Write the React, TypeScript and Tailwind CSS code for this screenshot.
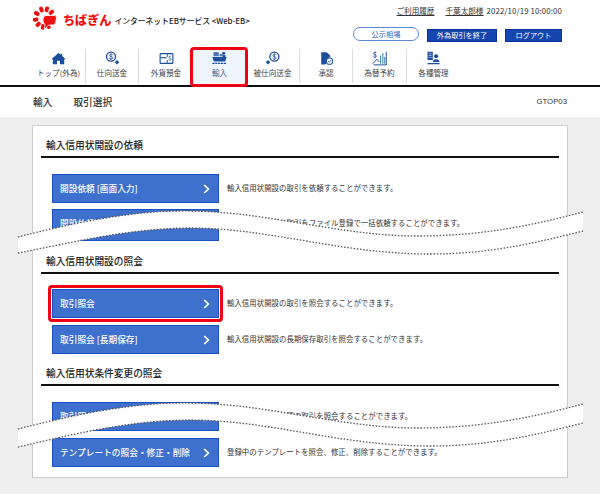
const font = "font-['Noto_Sans_CJK_JP','Liberation_Sans',sans-serif]";

function Logo() {
  const petals = [-20, 15, 50, 85, 120, 155, 190, 225, 260, 300];
  return (
    <svg width="24" height="24" viewBox="0 0 24 24" className="shrink-0">
      {petals.map((a) => (
        <rect key={a} x="9.6" y="0.2" width="3.8" height="5.6" rx="1.3" fill="#ee1111" transform={`rotate(${a} 11.5 12)`} />
      ))}
      <path d="M13 9.5 H21 C23 9.5 23.6 10.5 23.4 12.5 L22.6 16.5 C22.3 18 21 18.6 19.5 18.8 L15.5 19.2 L11.5 23.5 L12 18.5 C10.2 17.5 9.6 15 10.2 12.5 C10.6 10.5 11.5 9.5 13 9.5Z" fill="#ee1111" stroke="#fff" strokeWidth="0.8" />
    </svg>
  );
}

const stroke = "#1d4e9e";
const icons: Record<string, React.ReactNode> = {
  home: <path d="M10 2.5 L13 5 V3.5 H15 V6.8 L19 10.2 L17.6 11.6 V17.5 H12 V13 H8 V17.5 H2.4 V11.6 L1 10.2Z" fill={stroke} />,
  send: (<g><circle cx="8" cy="7.5" r="6" fill="none" stroke={stroke} strokeWidth="1.8" /><path d="M10.4 5.2 C9.5 4 6 4 6 6 C6 8 10.4 7 10.4 9 C10.4 11 6.8 11 5.6 9.8 M8 3 V12" fill="none" stroke={stroke} strokeWidth="1" /><path d="M16 12 L19 15 L16 18 L13 15Z" fill={stroke} /></g>),
  dep: (<g><rect x="1.5" y="3.5" width="17" height="13" rx="1" fill="none" stroke={stroke} strokeWidth="1.5" /><path d="M2 9 H10" stroke={stroke} strokeWidth="1.5" /><path d="M11 4 V8 M11 12 V16" stroke={stroke} strokeWidth="1.2" /><path d="M16.2 7.5 C15.5 6.6 13 6.7 13 8.2 C13 9.8 16.2 9.3 16.2 11 C16.2 12.5 13.6 12.5 12.8 11.6" fill="none" stroke={stroke} strokeWidth="1" /></g>),
  ship: (<g><path d="M2 1.5 H9 V7 H2Z" fill="#4a74b8" /><rect x="10" y="4" width="4" height="3" fill="#4a74b8" /><circle cx="15.5" cy="3" r="2" fill={stroke} /><path d="M14 5.5 H18 V9 H14Z" fill={stroke} /><path d="M0.5 8 H19.5 L17.5 14 H2.5Z" fill={stroke} /><path d="M0.5 16.5 H19.5" stroke={stroke} strokeWidth="1.6" strokeDasharray="3 0.8" /></g>),
  recv: (<g><circle cx="12.5" cy="7.5" r="6" fill="none" stroke={stroke} strokeWidth="1.8" /><path d="M14.9 5.2 C14 4 10.5 4 10.5 6 C10.5 8 14.9 7 14.9 9 C14.9 11 11.3 11 10.1 9.8 M12.5 3 V12" fill="none" stroke={stroke} strokeWidth="1" /><path d="M4 12 L7 15 L4 18 L1 15Z" fill={stroke} /></g>),
  ok: (<g><path d="M3 1.5 H10 L15 6 V8 C11 9 9.5 12 10 16 L8 18 H3Z" fill={stroke} /><circle cx="14" cy="13.5" r="4.2" fill="#fff" stroke={stroke} strokeWidth="1.4" /><path d="M12.2 13.5 L13.7 15 L16 12.2" fill="none" stroke={stroke} strokeWidth="1.1" /></g>),
  fx: (<g><path d="M6 2.5 C5 1.3 2 1.5 2 3.5 C2 5.5 6 4.8 6 6.8 C6 8.6 3 8.8 1.8 7.6 M4 0.5 V10" fill="none" stroke={stroke} strokeWidth="1" /><path d="M1 17 L6.5 11 L9.5 14.5 M19 1 V18.5 H2" fill="none" stroke={stroke} strokeWidth="1.3" /><path d="M11.5 6 V17 M14.5 3 V17 M17 8 V17" stroke="#3a86a8" strokeWidth="1.4" /></g>),
  mgmt: (<g><rect x="2" y="1" width="7" height="11" fill={stroke} /><path d="M3.5 3.5 H7.5 M3.5 6 H7.5 M3.5 8.5 H7.5" stroke="#fff" strokeWidth="0.7" /><circle cx="13.5" cy="7" r="2.8" fill={stroke} /><path d="M9 14.5 C9 10 18 10 18 14.5Z" fill={stroke} /><path d="M2 16.8 H18" stroke={stroke} strokeWidth="1.8" /></g>),
};

const tabs: [string, string, number][] = [
  ["トップ(外為)", "home", 54],
  ["仕向送金", "send", 53],
  ["外貨預金", "dep", 54],
  ["輸入", "ship", 53],
  ["被仕向送金", "recv", 54],
  ["承認", "ok", 53],
  ["為替予約", "fx", 54],
  ["各種管理", "mgmt", 53],
];

function Nav() {
  return (
    <div className="flex pl-[32px] h-[36px] items-start">
      {tabs.map(([label, icon, w], i) => {
        const active = label === "輸入";
        const sep = i < tabs.length - 1 && !active && tabs[i + 1][0] !== "輸入";
        return (
          <div
            key={label}
            className={`relative flex flex-col items-center h-[34px] pt-[2px] shrink-0 ${sep ? "border-r border-[#dddddd]" : ""} ${active ? "bg-[#eef4fc]" : ""}`}
            style={{ width: w }}
          >
            <svg width="15" height="15" viewBox="0 0 20 20" className="shrink-0">{icons[icon]}</svg>
            <span className={`text-[7.6px] leading-[12px] mt-[1px] whitespace-nowrap ${active ? "text-[#4a5f80]" : "text-[#444444]"}`}>{label}</span>
            {active && <div className="absolute -left-[3px] -top-[2px] -right-[2px] -bottom-[4px] border-[3px] border-[#f00014] rounded-[4px]" />}
          </div>
        );
      })}
    </div>
  );
}

function Btn({ label, desc, hl, tall }: { label: string; desc: string; hl?: boolean; tall?: boolean }) {
  return (
    <div className="flex items-start">
      <div className={`relative w-[167px] bg-[#3e70cd] border border-[#1a4fc4] shrink-0 ${tall ? "h-[32px]" : "h-[29px]"}`}>
        <div className="flex items-center justify-between h-[27px] pl-[7px] pr-[8px]">
          <span className="text-white text-[8.7px] font-medium whitespace-nowrap">{label}</span>
          <svg width="7" height="10" viewBox="0 0 7 10" className="shrink-0"><path d="M1.2 1 L5.4 5 L1.2 9" fill="none" stroke="#fff" strokeWidth="1.7" /></svg>
        </div>
        {hl && <div className="absolute -inset-[5px] border-[3px] border-[#f00014] rounded-[4px]" />}
      </div>
      <span className="ml-[8px] h-[27px] flex items-center text-[7.45px] text-[#333333] whitespace-nowrap">{desc}</span>
    </div>
  );
}

type Item = { label: string; desc: string; hl?: boolean; tall?: boolean };

function Section({ title, items, cls, pad }: { title: string; items: Item[]; cls: string; pad: string }) {
  return (
    <div className={cls}>
      <div className="mx-[8px] border-b-2 border-[#111111] pl-[5px] h-[23px] text-[9.7px] font-medium leading-[20px] text-[#222222]">{title}</div>
      <div className={`pl-[19px] flex flex-col ${pad}`}>
        {items.map((it) => <Btn key={it.label} {...it} />)}
      </div>
    </div>
  );
}

function Wave({ top, last }: { top: number; last?: boolean }) {
  const a = "M18 45 C70 32 130 18 190 19 C270 20 340 44 417 44 C480 44 530 34 583 20";
  const b = last
    ? "M18 63 C70 51 130 36 190 36 C270 36 340 62 430 62 C490 62 535 51 583 39"
    : "M18 61 C70 51 130 36 190 36 C270 36 340 62 430 62 C490 62 535 51 583 39";
  const rev = last
    ? "L583 39 C535 51 490 62 430 62 C340 62 270 36 190 36 C130 36 70 51 18 63Z"
    : "L583 39 C535 51 490 62 430 62 C340 62 270 36 190 36 C130 36 70 51 18 61Z";
  return (
    <svg width="600" height="70" viewBox="0 0 600 70" className="absolute left-0" style={{ top }}>
      <path d={a + rev} fill="#fff" />
      <path d={a} fill="none" stroke="#555" strokeWidth="1.3" strokeDasharray="1.5 1.7" />
      <path d={b} fill="none" stroke="#555" strokeWidth="1.3" strokeDasharray="1.5 1.7" />
    </svg>
  );
}

export default function App() {
  return (
    <div className={`relative w-[600px] h-[494px] overflow-hidden bg-[#eeeeee] ${font}`}>
      <div className="bg-white h-[87px] border-b-[2px] border-[#111111]">
        <div className="flex h-[49px]">
          <div className="flex items-start pl-[33px] pt-[6px] w-[300px]">
            <Logo />
            <span className="ml-[6px] mt-[6px] text-[#ee1111] text-[12.1px] font-black leading-[16px] whitespace-nowrap">ちばぎん</span>
            <span className="ml-[3px] mt-[9px] text-[7.8px] leading-[12px] text-[#222222] whitespace-nowrap font-medium">インターネットEBサービス &lt;Web-EB&gt;</span>
          </div>
          <div className="flex-1 flex flex-col items-end pr-[38px] pt-[5px]">
            <div className="flex items-center h-[12px] text-[7.6px] text-[#333333] whitespace-nowrap">
              <span className="underline">ご利用履歴</span>
              <span className="underline ml-[11px]">千葉太郎様</span>
              <span className="ml-[3px] text-[7.9px] tracking-[0.1px]">2022/10/19 10:00:00</span>
            </div>
            <div className="flex items-start mt-[10px] gap-[8px]">
              <div className="w-[66px] h-[14px] rounded-full border border-[#5b8ad6] text-[7.2px] text-[#2a62b8] flex items-center justify-center">公示相場</div>
              <div className="w-[70px] h-[13px] mt-[2px] bg-[#1545ae] border border-[#0f2f9e] text-white text-[7.2px] flex items-center justify-center">外為取引を終了</div>
              <div className="w-[57px] h-[13px] mt-[2px] bg-[#1545ae] border border-[#0f2f9e] text-white text-[7.2px] flex items-center justify-center">ログアウト</div>
            </div>
          </div>
        </div>
        <Nav />
      </div>
      <div className="bg-white h-[30px] flex items-center justify-between px-[33px] text-[9.7px] text-[#333333]">
        <div className="flex gap-[21px] font-medium"><span>輸入</span><span>取引選択</span></div>
        <span className="text-[7.8px] font-['Liberation_Sans',sans-serif]">GTOP03</span>
      </div>
      <div className="px-[32px] pt-[8px]">
        <div className="w-[536px] h-[353px] bg-white border border-[#cccccc] pt-[9px]">
          <Section
            title="輸入信用状開設の依頼"
            cls=""
            pad="pt-[16px] gap-[6px]"
            items={[
              { label: "開設依頼 [画面入力]", desc: "輸入信用状開設の取引を依頼することができます。" },
              { label: "開設依頼 [ファイル登録]", desc: "輸入信用状開設の取引をファイル登録で一括依頼することができます。", tall: true },
            ]}
          />
          <Section
            title="輸入信用状開設の照会"
            cls="mt-[10px]"
            pad="pt-[15px] gap-[7px]"
            items={[
              { label: "取引照会", desc: "輸入信用状開設の取引を照会することができます。", hl: true },
              { label: "取引照会 [長期保存]", desc: "輸入信用状開設の長期保存取引を照会することができます。" },
            ]}
          />
          <Section
            title="輸入信用状条件変更の照会"
            cls="mt-[9px]"
            pad="pt-[16px] gap-[7px]"
            items={[
              { label: "取引照会", desc: "輸入信用状条件変更の取引を照会することができます。" },
              { label: "テンプレートの照会・修正・削除", desc: "登録中のテンプレートを照会、修正、削除することができます。" },
            ]}
          />
        </div>
      </div>
      <Wave top={192} />
      <Wave top={384} last />
    </div>
  );
}
